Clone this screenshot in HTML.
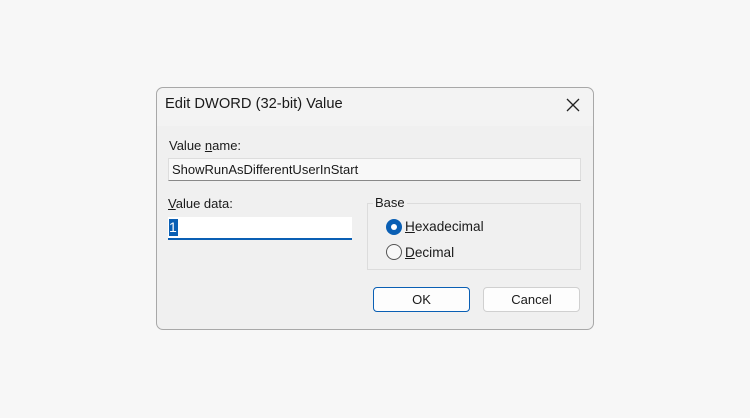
<!DOCTYPE html><html><head><style>
body{margin:0;width:750px;height:418px;background:#f7f7f7;font-family:"Liberation Sans",sans-serif;position:relative;overflow:hidden}
.a{position:absolute}
.dlg{left:156px;top:87px;width:438px;height:243px;background:#f0f0f0;border:1px solid #a8a8a8;border-radius:7px;box-sizing:border-box}
.t{font-size:13px;color:#1a1a1a}
u{text-decoration:underline}
</style></head><body>
<div class="a dlg"></div>
<div class="a" style="left:157px;top:88px;width:436px;height:38px;background:#f3f3f3;border-radius:7px 7px 0 0"></div>
<div class="a t" style="left:165px;top:96px;font-size:14.7px">Edit DWORD (32-bit) Value</div>
<svg class="a" style="left:566px;top:98px" width="14" height="14"><path d="M1 1L13 13M13 1L1 13" stroke="#222" stroke-width="1.3"/></svg>
<div class="a t" style="left:169px;top:138px">Value <u>n</u>ame:</div>
<div class="a" style="left:168px;top:158px;width:413px;height:23px;background:#f8f8f8;border:1px solid #ddd;border-bottom-color:#888;box-sizing:border-box"></div>
<div class="a t" style="left:172px;top:162px">ShowRunAsDifferentUserInStart</div>
<div class="a t" style="left:168px;top:196px"><u>V</u>alue data:</div>
<div class="a" style="left:168px;top:217px;width:184px;height:23px;background:#fff;border-bottom:2px solid #0a5fb4;box-sizing:border-box"></div>
<div class="a" style="left:169px;top:219px;width:9px;height:17px;background:#0a5fb4;color:#fff;font-size:14px;line-height:17px">1</div>
<div class="a" style="left:367px;top:203px;width:214px;height:67px;border:1px solid #dcdcdc;box-sizing:border-box"></div>
<div class="a t" style="left:373px;top:195px;background:#f0f0f0;padding:0 2px">Base</div>
<div class="a" style="left:386px;top:219px;width:16px;height:16px;border-radius:50%;background:#0a5fb4"></div>
<div class="a" style="left:391px;top:224px;width:6px;height:6px;border-radius:50%;background:#fff"></div>
<div class="a t" style="left:405px;top:219px;font-size:13.6px"><u>H</u>exadecimal</div>
<div class="a" style="left:386px;top:244px;width:16px;height:16px;border-radius:50%;border:1px solid #555;box-sizing:border-box;background:#f8f8f8"></div>
<div class="a t" style="left:405px;top:245px;font-size:13.6px"><u>D</u>ecimal</div>
<div class="a t" style="left:373px;top:287px;width:97px;height:25px;border:1px solid #0a5fb4;border-radius:4px;background:#fdfdfd;box-sizing:border-box;text-align:center;line-height:23px">OK</div>
<div class="a t" style="left:483px;top:287px;width:97px;height:25px;border:1px solid #d0d0d0;border-radius:4px;background:#fdfdfd;box-sizing:border-box;text-align:center;line-height:23px">Cancel</div>
</body></html>
